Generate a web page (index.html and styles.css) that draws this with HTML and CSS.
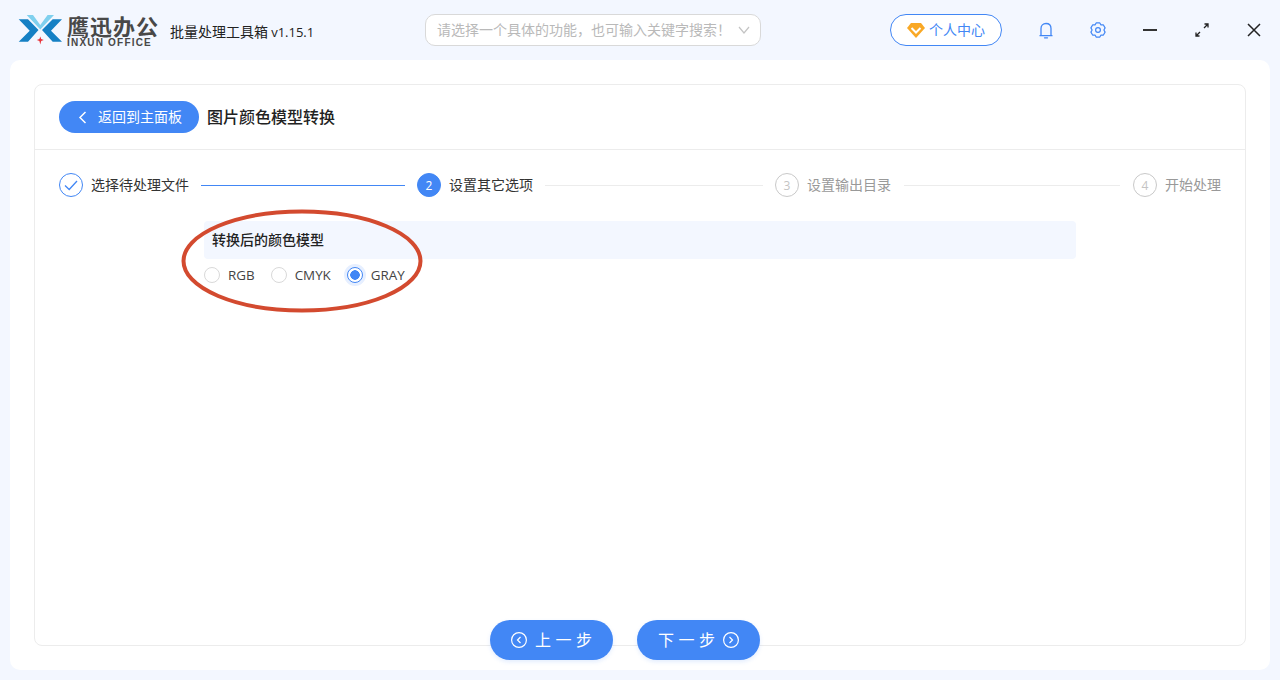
FILE: index.html
```html
<!DOCTYPE html>
<html lang="zh-CN">
<head>
    <meta charset="UTF-8">
    <meta name="viewport" content="width=device-width, initial-scale=1.0">
    <title>鹰迅办公 - 图片颜色模型转换</title>
    <link rel="stylesheet" href="styles.css">
</head>
<body>
    <header class="topbar">
        <div class="brand">
            <svg class="brand-mark" width="44" height="32" viewBox="0 0 44 32">
                <path d="M.7 5.3H10L20.5 16 10 27.7H.7L11.7 16.7Z" fill="#1580c4"/>
                <path d="M44 5.3H34.7L24 16 34.7 27.7H44L33 16.7Z" fill="#1580c4"/>
                <path d="M8.7 1H15L22.3 11 29.6 1H36L22.3 15.5Z" fill="#7fd0ee"/>
                <path d="M22.3 22.5L23.2 25.1 25.8 26 23.2 26.9 22.3 30.5 21.4 26.9 18.8 26 21.4 25.1Z" fill="#e8343a"/>
            </svg>
            <div class="brand-text">
                <div class="brand-cn">鹰迅办公</div>
                <div class="brand-en">INXUN OFFICE</div>
            </div>
        </div>
        <div class="app-name">批量处理工具箱 <span class="latin">v1.15.1</span></div>
        <div class="search">
            <span class="search-text">请选择一个具体的功能，也可输入关键字搜索！</span>
            <svg width="12" height="8" viewBox="0 0 12 8"><path d="M1 1L6 7 11 1" fill="none" stroke="#c4c4c4" stroke-width="1.2"/></svg>
        </div>
        <div class="user-btn">
            <svg width="18" height="15" viewBox="0 0 18 15">
                <path d="M4 0H14L18 5 9 15 0 5Z" fill="#f9a825"/>
                <path d="M4.5 5L9 9.5 13.5 5" fill="none" stroke="#fff" stroke-width="2"/>
            </svg>
            <span>个人中心</span>
        </div>
        <div class="window-tools">
            <svg class="tool-bell" width="14" height="17" viewBox="0 0 14 17">
                <path d="M2 13.5V6.5C2 3.5 4 1.5 7 1.5S12 3.5 12 6.5V13.5M1 13.7H13M5.5 15.8H8.5" fill="none" stroke="#4287f5" stroke-width="1.3" stroke-linecap="round"/>
            </svg>
            <svg class="tool-gear" width="16" height="16" viewBox="0 0 16 16">
                <path d="M9.66 .79L10.95 2.89 13.41 2.95 15.08 5.84 13.9 8 15.08 10.16 13.41 13.05 10.95 13.11 9.66 15.21H6.34L5.05 13.11 2.59 13.05 .92 10.16 2.1 8 .92 5.84 2.59 2.95 5.05 2.89 6.34 .79Z" fill="none" stroke="#4287f5" stroke-width="1.2" stroke-linejoin="round"/>
                <circle cx="8" cy="8" r="2.4" fill="none" stroke="#4287f5" stroke-width="1.2"/>
            </svg>
            <span class="tool-min"></span>
            <svg class="tool-max" width="14" height="14" viewBox="0 0 14 14">
                <path d="M9 5L13 1M9.5 1H13V4.5M5 9L1 13M1 9.5V13H4.5" fill="none" stroke="#222" stroke-width="1.3"/>
            </svg>
            <svg class="tool-close" width="14" height="14" viewBox="0 0 14 14">
                <path d="M1 1L13 13M13 1L1 13" fill="none" stroke="#222" stroke-width="1.5"/>
            </svg>
        </div>
    </header>

    <main class="panel">
        <div class="card">
            <div class="card-head">
                <div class="back-btn">
                    <svg width="9" height="13" viewBox="0 0 9 13"><path d="M7.5 1L2 6.5 7.5 12" fill="none" stroke="#fff" stroke-width="1.5"/></svg>
                    <span>返回到主面板</span>
                </div>
                <h1 class="page-title">图片颜色模型转换</h1>
            </div>

            <div class="steps">
                <div class="step done">
                    <span class="step-icon">
                        <svg width="14" height="11" viewBox="0 0 14 11"><path d="M1 5.5L5.2 9.5 13 1" fill="none" stroke="#4287f5" stroke-width="1.3"/></svg>
                    </span>
                    <span class="step-label">选择待处理文件</span>
                </div>
                <span class="step-line line-a"></span>
                <div class="step active">
                    <span class="step-icon">2</span>
                    <span class="step-label">设置其它选项</span>
                </div>
                <span class="step-line line-b"></span>
                <div class="step">
                    <span class="step-icon">3</span>
                    <span class="step-label">设置输出目录</span>
                </div>
                <span class="step-line line-c"></span>
                <div class="step">
                    <span class="step-icon">4</span>
                    <span class="step-label">开始处理</span>
                </div>
            </div>

            <section class="options">
                <div class="options-title">转换后的颜色模型</div>
                <div class="radios">
                    <label class="radio"><span class="radio-dot"></span>RGB</label>
                    <label class="radio"><span class="radio-dot"></span>CMYK</label>
                    <label class="radio checked"><span class="radio-dot"></span>GRAY</label>
                </div>
            </section>
        </div>

        <!-- red hand-drawn mark over the options -->
        <svg class="mark" width="248" height="108" viewBox="0 0 248 108">
            <ellipse cx="124" cy="53" rx="118.5" ry="49.5" fill="none" stroke="#d34a2f" stroke-width="4"/>
        </svg>

        <div class="pager">
            <div class="pager-btn">
                <svg width="16" height="16" viewBox="0 0 16 16"><circle cx="8" cy="8" r="7.4" fill="none" stroke="#fff" stroke-width="1.2"/><path d="M9.5 5L6.5 8 9.5 11" fill="none" stroke="#fff" stroke-width="1.2"/></svg>
                <span>上一步</span>
            </div>
            <div class="pager-btn pager-next">
                <span>下一步</span>
                <svg width="16" height="16" viewBox="0 0 16 16"><circle cx="8" cy="8" r="7.4" fill="none" stroke="#fff" stroke-width="1.2"/><path d="M6.5 5L9.5 8 6.5 11" fill="none" stroke="#fff" stroke-width="1.2"/></svg>
            </div>
        </div>
    </main>
</body>
</html>
```

FILE: styles.css
```css
* {
    box-sizing: border-box;
}

body {
    margin: 0;
    height: 680px;
    overflow: hidden;
    background-color: #f3f7ff;
    font-family: "Noto Sans CJK SC", "Open Sans", sans-serif;
    font-size: 14px;
    color: #222;
}

.latin {
    font-family: "Open Sans", "Noto Sans CJK SC", sans-serif;
    font-size: 13px;
}

/* CJK text sits a little low in its line box */
.search-text,
.user-btn span,
.back-btn span,
.page-title,
.step-label,
.options-title,
.pager-btn span {
    padding-bottom: 2px;
}

/* Top bar */
.topbar {
    height: 60px;
    display: flex;
    align-items: center;
    padding-left: 18px;
}

.brand {
    display: flex;
    align-items: center;
    width: 152px;
}

.brand-mark {
    flex: none;
    margin-right: 5px;
}

.brand-cn {
    height: 22px;
    font-size: 22px;
    font-weight: 700;
    line-height: 22px;
    letter-spacing: 1px;
    color: #484848;
    white-space: nowrap;
}

.brand-en {
    height: 9px;
    margin-top: 2px;
    font-family: "Liberation Sans", sans-serif;
    font-size: 10px;
    font-weight: 700;
    line-height: 9px;
    letter-spacing: 1.2px;
    color: #484848;
    white-space: nowrap;
}

.app-name {
    width: 255px;
    line-height: 18px;
    white-space: nowrap;
    padding-top: 2px;
}

.search {
    width: 336px;
    height: 32px;
    display: flex;
    align-items: center;
    justify-content: space-between;
    padding: 0 10px 0 11px;
    background-color: #fff;
    border: 1px solid #d9d9d9;
    border-radius: 10px;
    color: #b9b9b9;
}

.user-btn {
    width: 112px;
    height: 32px;
    margin-left: 129px;
    display: flex;
    align-items: center;
    justify-content: center;
    gap: 4px;
    background-color: #fff;
    border: 1px solid #4287f5;
    border-radius: 16px;
    color: #4287f5;
}

.window-tools {
    display: flex;
    align-items: center;
    margin-left: 37px;
}

.tool-gear {
    margin-left: 37px;
}

.tool-min {
    width: 14px;
    height: 2px;
    margin-left: 37px;
    background-color: #333;
}

.tool-max {
    margin-left: 38px;
}

.tool-close {
    margin-left: 38px;
}

/* White panel */
.panel {
    position: relative;
    height: 610px;
    margin: 0 10px;
    padding: 24px;
    background-color: #fff;
    border-radius: 10px;
}

.card {
    height: 562px;
    border: 1px solid #ececec;
    border-radius: 8px;
}

.card-head {
    height: 65px;
    display: flex;
    align-items: center;
    gap: 8px;
    padding-left: 24px;
    border-bottom: 1px solid #ececec;
}

.back-btn {
    width: 140px;
    height: 32px;
    display: flex;
    align-items: center;
    gap: 11px;
    padding-left: 19px;
    background-color: #4287f5;
    border-radius: 16px;
    color: #fff;
}

.page-title {
    margin: 0;
    font-size: 16px;
    font-weight: 500;
    color: #222;
}

/* Steps */
.steps {
    display: flex;
    align-items: center;
    padding: 23px 24px 0;
}

.step {
    display: flex;
    align-items: center;
    gap: 8px;
    flex: none;
    color: #999;
}

.step-icon {
    width: 24px;
    height: 24px;
    display: flex;
    align-items: center;
    justify-content: center;
    border: 1px solid #c9c9c9;
    border-radius: 50%;
    font-family: "Open Sans", sans-serif;
    font-size: 12px;
    color: #c4c4c4;
}

.step.done .step-icon {
    border-color: #4287f5;
}

.step.active .step-icon {
    border-color: #4287f5;
    background-color: #4287f5;
    color: #fff;
}

.step.done,
.step.active {
    color: #333;
}

.step-line {
    height: 1px;
    margin: 0 12px;
    background-color: #ececec;
}

.line-a {
    width: 204px;
    background-color: #4287f5;
}

.line-b {
    width: 218px;
}

.line-c {
    width: 216px;
    margin: 0 13px;
}

/* Options */
.options {
    width: 872px;
    margin: 24px 0 0 169px;
}

.options-title {
    height: 38px;
    display: flex;
    align-items: center;
    padding-left: 8px;
    background-color: #f3f7ff;
    border-radius: 4px;
    font-weight: 500;
    color: #222;
}

.radios {
    display: flex;
    align-items: center;
    gap: 16px;
    height: 32px;
}

.radio {
    display: flex;
    align-items: center;
    gap: 8px;
    font-family: "Open Sans", sans-serif;
    font-size: 13.4px;
    color: #444;
}

.radio-dot {
    width: 16px;
    height: 16px;
    border: 1px solid #d9d9d9;
    border-radius: 50%;
    background-color: #fff;
}

.radio.checked .radio-dot {
    border-color: #4287f5;
    box-shadow: 0 0 0 3px #e6efff;
    background-image: radial-gradient(circle, #4287f5 0, #4287f5 4.5px, transparent 5px);
}

/* Overlays */
.mark {
    position: absolute;
    left: 168px;
    top: 148px;
}

.pager {
    position: absolute;
    left: 480px;
    top: 560px;
    display: flex;
    gap: 24px;
}

.pager-btn {
    width: 123px;
    height: 40px;
    display: flex;
    align-items: center;
    gap: 8px;
    padding-left: 21px;
    background-color: #4287f5;
    border-radius: 20px;
    box-shadow: 0 2px 4px rgba(66, 135, 245, 0.15);
    font-size: 16px;
    letter-spacing: 4.5px;
    color: #fff;
}

.pager-next {
    gap: 3.5px;
}
```
